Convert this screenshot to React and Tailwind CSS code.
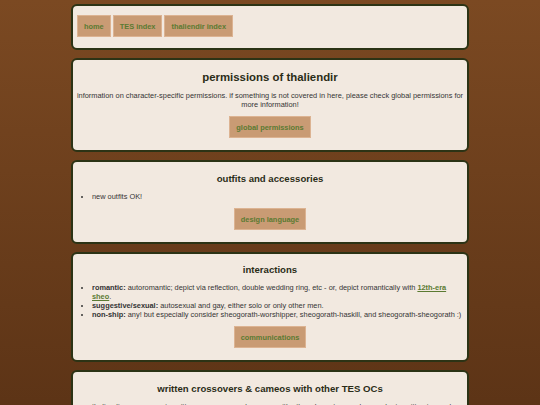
import React from "react";

const font = { fontFamily: '"Liberation Sans", Arial, sans-serif' };

function NavButton({ children }) {
  return (
    <a
      href="#"
      className="flex h-[22px] items-center border border-[#dcb392] bg-[#c99b74] px-[6px] text-[7.4px] font-bold leading-[9px] text-[#5b7a32]"
    >
      {children}
    </a>
  );
}

function Card({ children, className = "" }) {
  return (
    <section
      className={`rounded-[6px] border-2 border-[#2c3315] bg-[#f2e9e0] px-[3px] ${className}`}
    >
      {children}
    </section>
  );
}

function SectionButton({ children }) {
  return (
    <div className="mt-[7px] flex justify-center">
      <NavButton>{children}</NavButton>
    </div>
  );
}

export default function App() {
  return (
    <div
      className="min-h-[405px] bg-gradient-to-b from-[#7b4922] to-[#5a3215] pt-[4px] pb-[8px]"
      style={font}
    >
      <main className="mx-auto flex w-[398px] flex-col gap-[8px]">
        <Card className="pt-[9px] pb-[11px]">
          <nav className="flex gap-[2px] px-[1px]">
            <NavButton>home</NavButton>
            <NavButton>TES index</NavButton>
            <NavButton>thaliendir index</NavButton>
          </nav>
        </Card>

        <Card className="pt-[9px] pb-[12px]">
          <h1 className="text-center text-[11.4px] font-bold leading-[16px] text-[#2a2c17]">
            permissions of thaliendir
          </h1>
          <p className="mt-[6px] text-center text-[7.4px] leading-[9px] text-[#343434]">
            information on character-specific permissions. if something is not
            covered in here, please check global permissions for more information!
          </p>
          <SectionButton>global permissions</SectionButton>
        </Card>

        <Card className="pt-[10px] pb-[12px]">
          <h2 className="text-center text-[9.6px] font-bold leading-[13px] text-[#2a2c17]">
            outfits and accessories
          </h2>
          <ul className="mt-[7px] list-disc pl-[16px] text-[7.4px] leading-[9px] text-[#343434]">
            <li>new outfits OK!</li>
          </ul>
          <SectionButton>design language</SectionButton>
        </Card>

        <Card className="pt-[9px] pb-[12px]">
          <h2 className="text-center text-[9.6px] font-bold leading-[13px] text-[#2a2c17]">
            interactions
          </h2>
          <ul className="mt-[7px] list-disc pl-[16px] text-[7.4px] leading-[9px] text-[#343434]">
            <li>
              <b>romantic:</b> autoromantic; depict via reflection, double wedding
              ring, etc - or, depict romantically with{" "}
              <a href="#" className="font-bold text-[#5b7a32] underline">
                12th-era sheo
              </a>
              .
            </li>
            <li>
              <b>suggestive/sexual:</b> autosexual and gay, either solo or only
              other men.
            </li>
            <li>
              <b>non-ship:</b> any! but especially consider sheogorath-worshipper,
              sheogorath-haskill, and sheogorath-sheogorath :)
            </li>
          </ul>
          <SectionButton>communications</SectionButton>
        </Card>

        <Card className="pt-[10px] pb-[11px]">
          <h2 className="text-center text-[9.6px] font-bold leading-[13px] text-[#2a2c17]">
            written crossovers &amp; cameos with other TES OCs
          </h2>
          <ul className="mt-[7px] list-disc pl-[16px] text-[7.4px] leading-[9px] text-[#343434]">
            <li>
              thaliendir may appear in written crossovers and cameos with other
              characters, as long as he is written in good faith.
            </li>
          </ul>
        </Card>
      </main>
    </div>
  );
}
